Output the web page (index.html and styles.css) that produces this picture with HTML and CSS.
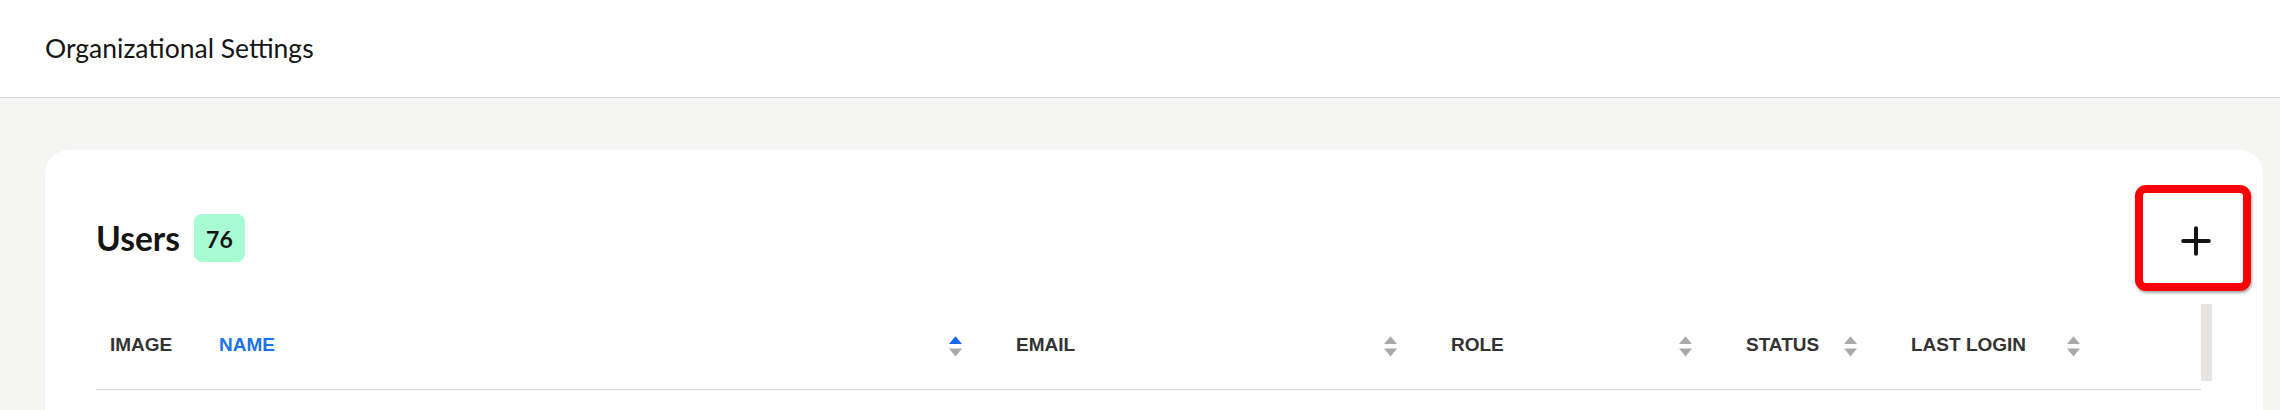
FILE: index.html
```html
<!DOCTYPE html>
<html lang="en">
<head>
<meta charset="utf-8">
<title>Organizational Settings</title>
<link rel="stylesheet" href="styles.css">
</head>
<body>
<header class="topbar">
  <h1 class="page-title">Organizational Settings</h1>
</header>
<main class="content">
  <section class="card">
    <div class="card-head">
      <div class="title-group">
        <h2 class="card-title">Users</h2>
        <span class="count-badge">76</span>
      </div>
      <button class="add-btn" type="button" aria-label="Add user">
        <svg class="plus-icon" width="30" height="30" viewBox="0 0 30 30"><path d="M15 2.2V27.8M2.2 15H27.8" fill="none" stroke="#141414" stroke-width="4" stroke-linecap="round"/></svg>
      </button>
    </div>
    <div class="table-wrap">
      <table class="users-table">
        <colgroup>
          <col class="w-image"><col class="w-name"><col class="w-email"><col class="w-role"><col class="w-status"><col class="w-login"><col class="w-actions">
        </colgroup>
        <thead>
          <tr>
            <th><div class="th-inner"><span class="th-label">IMAGE</span></div></th>
            <th><div class="th-inner"><span class="th-label active">NAME</span>
              <svg class="sort" width="13" height="21" viewBox="0 0 13 21"><path d="M0 8L6.5 0.3L13 8Z" fill="#1763f5"/><path d="M0 12.6H13L6.5 20.5Z" fill="#a9a9a9"/></svg></div></th>
            <th><div class="th-inner"><span class="th-label">EMAIL</span>
              <svg class="sort" width="13" height="21" viewBox="0 0 13 21"><path d="M0 8L6.5 0.3L13 8Z" fill="#a9a9a9"/><path d="M0 12.6H13L6.5 20.5Z" fill="#a9a9a9"/></svg></div></th>
            <th><div class="th-inner"><span class="th-label">ROLE</span>
              <svg class="sort" width="13" height="21" viewBox="0 0 13 21"><path d="M0 8L6.5 0.3L13 8Z" fill="#a9a9a9"/><path d="M0 12.6H13L6.5 20.5Z" fill="#a9a9a9"/></svg></div></th>
            <th><div class="th-inner"><span class="th-label">STATUS</span>
              <svg class="sort" width="13" height="21" viewBox="0 0 13 21"><path d="M0 8L6.5 0.3L13 8Z" fill="#a9a9a9"/><path d="M0 12.6H13L6.5 20.5Z" fill="#a9a9a9"/></svg></div></th>
            <th><div class="th-inner"><span class="th-label">LAST LOGIN</span>
              <svg class="sort" width="13" height="21" viewBox="0 0 13 21"><path d="M0 8L6.5 0.3L13 8Z" fill="#a9a9a9"/><path d="M0 12.6H13L6.5 20.5Z" fill="#a9a9a9"/></svg></div></th>
            <th><div class="th-inner"></div></th>
          </tr>
        </thead>
      </table>
      <div class="scroll-track"></div>
    </div>
  </section>
</main>
</body>
</html>
```
FILE: styles.css
```css
* { box-sizing: border-box; }
html, body {
  margin: 0;
  padding: 0;
  height: 410px;
  overflow: hidden;
}
body {
  background: #f5f5f3;
  font-family: "Lato", "Liberation Sans", sans-serif;
  color: #141414;
}
.topbar {
  height: 98px;
  background: #ffffff;
  border-bottom: 1px solid #cfcfcf;
  display: flex;
  align-items: center;
  padding: 1px 0 0 45px;
}
.page-title {
  margin: 0;
  font-size: 26.5px;
  font-weight: 400;
  line-height: 1.2;
  color: #151515;
}
.content {
  padding: 52px 17px 0 45px;
}
.card {
  background: #ffffff;
  border-radius: 24px;
  padding: 35px 51px 120px 51px;
}
.card-head {
  display: flex;
  align-items: center;
  justify-content: space-between;
  height: 106px;
  margin-bottom: 13px;
}
.title-group {
  display: flex;
  align-items: center;
  gap: 14px;
}
.card-title {
  margin: 0;
  font-size: 33.5px;
  font-weight: 700;
  line-height: 1.2;
  color: #151515;
}
.count-badge {
  display: flex;
  align-items: center;
  justify-content: center;
  width: 51px;
  height: 48px;
  border-radius: 8px;
  background: #a8fcd4;
  font-size: 23px;
  font-weight: 700;
  color: #141414;
  padding-top: 1px;
}
.add-btn {
  width: 116px;
  height: 106px;
  margin-right: -39px;
  border: 8px solid #ff0000;
  border-radius: 11px;
  background: #ffffff;
  box-shadow: 1px 2px 3px rgba(0, 0, 0, 0.35);
  display: flex;
  align-items: center;
  justify-content: center;
  padding: 6px 0 0 6px;
  cursor: pointer;
}
.plus-icon { display: block; }
.table-wrap {
  display: flex;
  align-items: flex-start;
}
.users-table {
  width: 2105px;
  table-layout: fixed;
  border-collapse: collapse;
}
.w-image { width: 109px; }
.w-name { width: 797px; }
.w-email { width: 435px; }
.w-role { width: 295px; }
.w-status { width: 165px; }
.w-login { width: 223px; }
.w-actions { width: 81px; }
.users-table th {
  height: 85px;
  padding: 0;
  border-bottom: 1px solid #d6d6d6;
  text-align: left;
  vertical-align: middle;
}
.th-inner {
  display: flex;
  align-items: center;
  justify-content: space-between;
  padding: 0 40px 0 14px;
  height: 84px;
}
.th-label {
  font-family: "Liberation Sans", Arial, sans-serif;
  font-size: 19px;
  font-weight: 700;
  color: #333333;
  padding-bottom: 3px;
  white-space: nowrap;
}
.th-label.active { color: #1a73e8; }
.sort { display: block; flex: none; }
.scroll-track {
  width: 11px;
  height: 77px;
  background: #e6e5e3;
  flex: none;
}
```
